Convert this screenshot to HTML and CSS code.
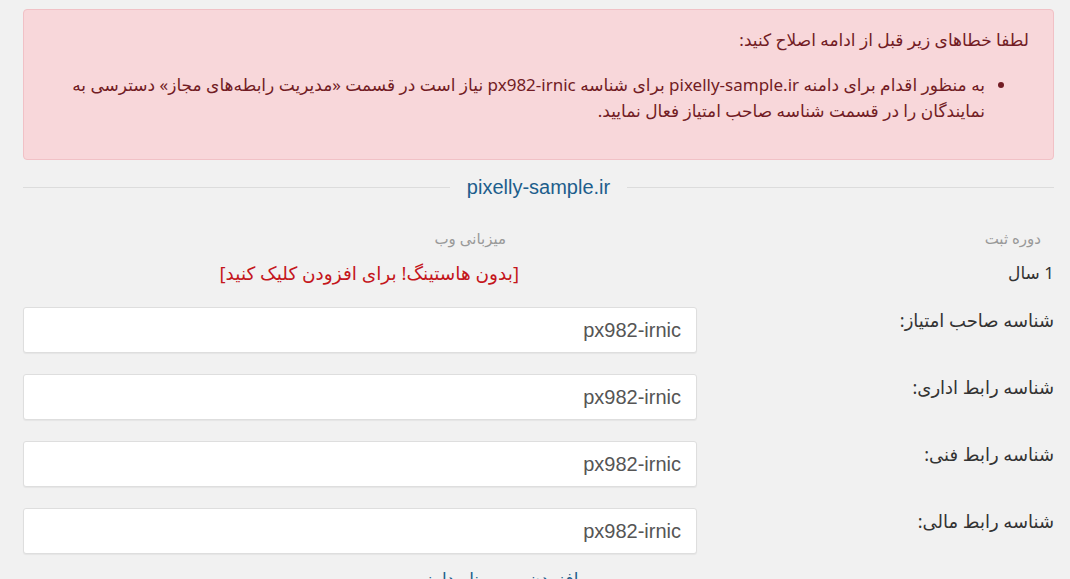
FILE: index.html
```html
<!DOCTYPE html>
<html lang="fa" dir="rtl">
<head>
    <meta charset="UTF-8">
    <meta name="viewport" content="width=device-width, initial-scale=1.0">
    <title>ثبت دامنه</title>
    <link rel="stylesheet" href="styles.css">
</head>
<body>
<div class="page">
    <div class="alert-error">
        <p class="alert-title">لطفا خطاهای زیر قبل از ادامه اصلاح کنید:</p>
        <ul class="alert-list">
            <li>به منظور اقدام برای دامنه pixelly-sample.ir برای شناسه px982-irnic نیاز است در قسمت «مدیریت رابطه‌های مجاز» دسترسی به نمایندگان را در قسمت شناسه صاحب امتیاز فعال نمایید.</li>
        </ul>
    </div>

    <div class="domain-divider">
        <span class="divider-line"></span>
        <span class="domain-name">pixelly-sample.ir</span>
        <span class="divider-line"></span>
    </div>

    <div class="domain-info">
        <div class="info-head">دوره ثبت</div>
        <div class="info-head">میزبانی وب</div>
        <div class="info-value">1 سال</div>
        <div class="info-value"><a href="#" class="add-hosting">[بدون هاستینگ! برای افزودن کلیک کنید]</a></div>
    </div>

    <form class="contacts-form" action="#">
        <div class="form-row">
            <label for="owner">شناسه صاحب امتیاز:</label>
            <input type="text" id="owner" name="owner" value="px982-irnic"/>
        </div>
        <div class="form-row">
            <label for="admin">شناسه رابط اداری:</label>
            <input type="text" id="admin" name="admin" value="px982-irnic"/>
        </div>
        <div class="form-row">
            <label for="tech">شناسه رابط فنی:</label>
            <input type="text" id="tech" name="tech" value="px982-irnic"/>
        </div>
        <div class="form-row">
            <label for="billing">شناسه رابط مالی:</label>
            <input type="text" id="billing" name="billing" value="px982-irnic"/>
        </div>
    </form>

    <div class="more-link">
        <a href="#">افزودن سرور نام دامنه</a>
    </div>
</div>
</body>
</html>
```

FILE: styles.css
```css
body{
    margin: 0;
    padding: 0;
    background-color: #f1f1f1;
    font-family: "Noto Sans", "DejaVu Sans", sans-serif;
    color: #333;
}
.page{
    padding: 9px 16px 0 23px;
}
.alert-error{
    background-color: #f8d7da;
    border: 1px solid #f1c1c6;
    border-radius: 4px;
    color: #721c24;
    height: 151px;
    box-sizing: border-box;
    padding: 16px 24px 0 22px;
}
.alert-title{
    margin: 0;
    font-size: 17px;
    line-height: 28px;
}
.alert-list{
    margin: 18px 0 0 0;
    padding: 0 44px 0 0;
    font-size: 17px;
    line-height: 26px;
}
.domain-divider{
    display: flex;
    align-items: center;
    height: 54px;
}
.divider-line{
    flex: 1;
    height: 1px;
    background-color: #dcdcdc;
}
.domain-name{
    padding: 0 17px;
    color: #1d5e8c;
    font-family: "Liberation Sans", Arial, sans-serif;
    font-size: 20px;
}
.domain-info{
    display: grid;
    grid-template-columns: 535px 1fr;
    margin-top: 13px;
}
.info-head{
    padding-right: 13px;
    font-size: 15px;
    color: #999;
    line-height: 22px;
}
.info-value{
    font-size: 17px;
    line-height: 26px;
    margin-top: 11px;
}
.add-hosting{
    color: #c4161c;
    text-decoration: none;
    font-size: 18.5px;
}
.contacts-form{
    margin-top: 20px;
}
.form-row{
    display: flex;
    align-items: flex-start;
    margin-bottom: 21px;
}
.form-row:last-child{
    margin-bottom: 12px;
}
.form-row label{
    flex: 1;
    font-size: 18px;
    line-height: 26px;
}
.form-row input{
    width: 674px;
    height: 46px;
    box-sizing: border-box;
    border: 1px solid #dedede;
    border-radius: 3px;
    background-color: #fff;
    box-shadow: 0 1px 1px rgba(0,0,0,0.05);
    padding: 0 15px;
    font-family: "Liberation Sans", Arial, sans-serif;
    font-size: 20px;
    color: #555;
    text-align: right;
    direction: ltr;
}
.more-link{
    text-align: center;
    font-size: 17px;
    line-height: 26px;
    padding-right: 80px;
}
.more-link a{
    color: #1d5e8c;
    text-decoration: none;
}
```
